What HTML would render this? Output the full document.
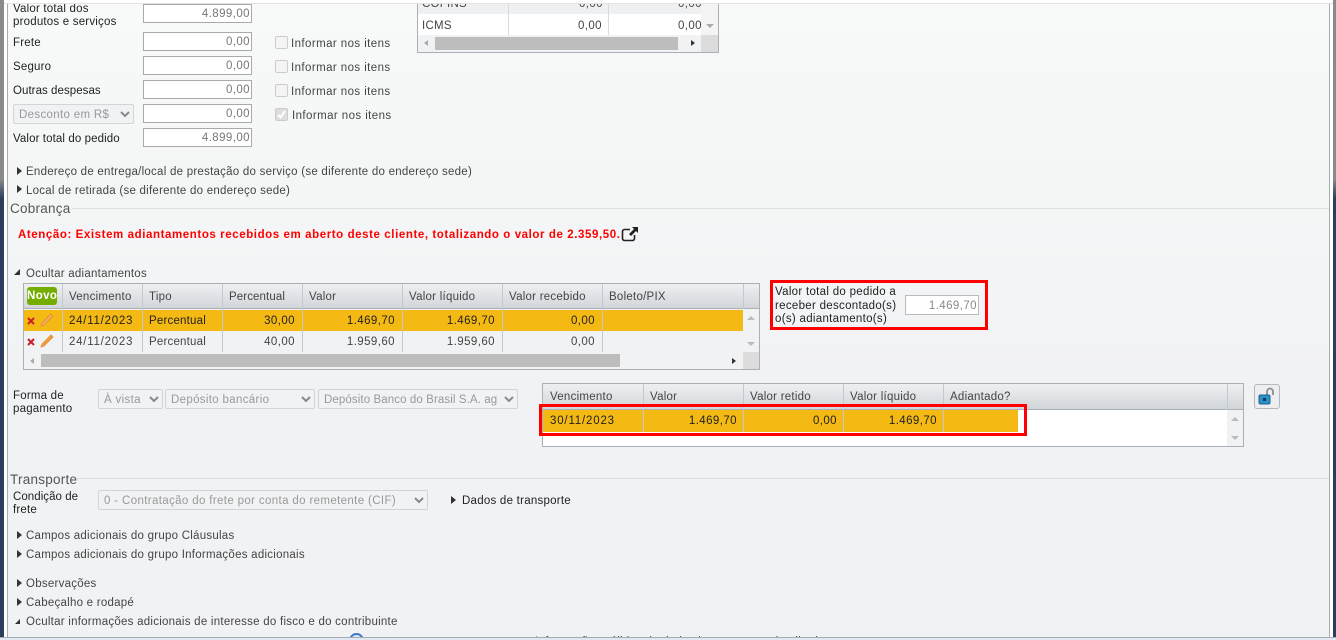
<!DOCTYPE html>
<html lang="pt"><head><meta charset="utf-8"><title>Cobrança</title>
<style>
html,body{margin:0;padding:0;width:1336px;height:640px;overflow:hidden;background:#f1f2f4}
body{position:relative;font-family:"Liberation Sans",Arial,sans-serif;font-size:11.5px;color:#444;letter-spacing:.25px}
.a{position:absolute;box-sizing:border-box}
.t{position:absolute;white-space:nowrap;line-height:14px;margin-top:1px}
.d{color:#222;letter-spacing:.2px}
.n{letter-spacing:.75px}
.inf{letter-spacing:.42px}
.in{position:absolute;box-sizing:border-box;background:#fff;border:1px solid #a9a9a9;color:#777;text-align:right;padding-right:1px;line-height:19px;height:19px;width:109px;left:143px;letter-spacing:.42px}
.cb{position:absolute;box-sizing:border-box;left:275px;width:13px;height:13px;border:1px solid #ccc;border-radius:2px;background:#f4f4f4}
.sel{position:absolute;box-sizing:border-box;height:20px;border:1px solid #d4d4d4;border-radius:2px;background:#f1f2f4;color:#999;line-height:20px;padding-left:5px;white-space:nowrap;overflow:hidden;letter-spacing:.33px}
.sel svg{position:absolute;right:3px;top:6px}
.hd{background:linear-gradient(#eef0f2,#d2d5d9)}
.vl{position:absolute;width:1px;background:#c2c8d0}
.bar{position:absolute;background:#bdbdbd}
.r{position:absolute;white-space:nowrap;text-align:right;line-height:14px;margin-top:1px;letter-spacing:.42px}
.tri{position:absolute;width:0;height:0;border-style:solid;border-width:4px 0 4px 5px;border-color:transparent transparent transparent #333}
.tdn{position:absolute;width:0;height:0;border-style:solid;border-width:0 0 6px 6px;border-color:transparent transparent #333 transparent}
</style></head><body>
<div class="a" style="left:0;top:0;width:1336px;height:640px;background:linear-gradient(#f8fafa,#f4f6f6 30%,#f1f2f4 60%)"></div>
<div class="a" style="left:0;top:0;width:1336px;height:3px;background:#fff;border-bottom:1px solid #e2e2e2;height:4px"></div>
<div class="a" style="left:0;top:0;width:4px;height:640px;background:linear-gradient(#8a8a8a 0,#8a8a8a 28%,#2b3f5c 31%)"></div>
<div class="a" style="left:4px;top:0;width:3px;height:640px;background:#fff"></div>
<div class="a" style="left:7px;top:0;width:1px;height:640px;background:#a8adb4"></div>
<div class="a" style="left:1329px;top:0;width:1px;height:640px;background:#a8adb4"></div>
<div class="a" style="left:1330px;top:0;width:3px;height:640px;background:#fff"></div>
<div class="a" style="left:1333px;top:0;width:3px;height:640px;background:linear-gradient(#8a8a8a 0,#8a8a8a 28%,#2b3f5c 31%)"></div>

<span class="t d" style="left:13px;top:1px">Valor total dos</span>
<span class="t d" style="left:13px;top:14px">produtos e serviços</span>
<div class="in" style="top:4px">4.899,00</div>
<span class="t d" style="left:13px;top:35px">Frete</span>
<div class="in" style="top:32px">0,00</div>
<div class="cb" style="top:36px"></div><span class="t inf" style="left:291px;top:36px">Informar nos itens</span>
<span class="t d" style="left:13px;top:59px">Seguro</span>
<div class="in" style="top:56px">0,00</div>
<div class="cb" style="top:60px"></div><span class="t inf" style="left:291px;top:60px">Informar nos itens</span>
<span class="t d" style="left:13px;top:83px;letter-spacing:.05px">Outras despesas</span>
<div class="in" style="top:80px">0,00</div>
<div class="cb" style="top:84px"></div><span class="t inf" style="left:291px;top:84px">Informar nos itens</span>
<div class="sel" style="left:13px;top:104px;width:121px">Desconto em R$<svg width="10" height="7" viewBox="0 0 10 7"><path d="M1 1l4 4 4-4" fill="none" stroke="#888" stroke-width="2"/></svg></div>
<div class="in" style="top:104px">0,00</div>
<div class="cb" style="top:108px;background:#ddd"><svg width="11" height="11" viewBox="0 0 11 11" style="position:absolute;left:0;top:0"><path d="M2 6l2.500 2.500L9 2" fill="none" stroke="#fff" stroke-width="2"/></svg></div><span class="t inf" style="left:292px;top:108px">Informar nos itens</span>
<span class="t d" style="left:13px;top:131px;letter-spacing:.1px">Valor total do pedido</span>
<div class="in" style="top:128px">4.899,00</div>

<!-- top right table -->
<div class="a" style="left:417px;top:4px;width:302px;height:49px;background:#fff;border:1px solid #a9b0b8;border-top:0"></div>
<div class="a" style="left:418px;top:4px;width:283px;height:10px;background:#eff0f2"></div>
<div class="a" style="left:701px;top:4px;width:17px;height:31px;background:#f4f4f4"></div>
<div class="vl" style="left:508px;top:4px;height:31px;background:#d8dbdf"></div>
<div class="vl" style="left:608px;top:4px;height:31px;background:#d8dbdf"></div>
<div class="a" style="left:417px;top:0;width:302px;height:14px;overflow:hidden">
 <span class="t" style="left:5px;top:-4px">COFINS</span><span class="r" style="right:116px;top:-4px">0,00</span><span class="r" style="right:17px;top:-4px">0,00</span>
</div>
<div class="a" style="left:0;top:0;width:1336px;height:4px;background:#fff;border-bottom:1px solid #e2e2e2"></div>
<div class="a" style="left:0;top:0;width:4px;height:4px;background:#8a8a8a"></div>
<div class="a" style="left:1333px;top:0;width:3px;height:4px;background:#8a8a8a"></div>
<span class="t" style="left:422px;top:18px">ICMS</span>
<span class="r" style="right:734px;top:18px">0,00</span>
<span class="r" style="right:634px;top:18px">0,00</span>
<div class="a" style="left:706px;top:24px;border-style:solid;border-width:4px 4px 0;border-color:#aaa transparent transparent;width:0;height:0"></div>
<div class="a" style="left:418px;top:35px;width:300px;height:17px;background:#f1f2f4"></div>
<div class="a" style="left:701px;top:35px;width:17px;height:17px;background:#dcdcdc"></div>
<div class="bar" style="left:435px;top:37px;width:243px;height:13px"></div>
<div class="a" style="left:424px;top:40px;border-style:solid;border-width:3px 4px 3px 0;border-color:transparent #aaa transparent transparent;width:0;height:0"></div>
<div class="a" style="left:691px;top:40px;border-style:solid;border-width:3px 0 3px 4px;border-color:transparent transparent transparent #333;width:0;height:0"></div>

<div class="tri" style="left:17px;top:167px"></div><span class="t" style="left:26px;top:164px">Endereço de entrega/local de prestação do serviço (se diferente do endereço sede)</span>
<div class="tri" style="left:17px;top:185px"></div><span class="t" style="left:26px;top:183px">Local de retirada (se diferente do endereço sede)</span>

<span class="t" style="left:10px;top:201px;font-size:13.5px;color:#555">Cobrança</span>
<div class="a" style="left:72px;top:208px;width:1257px;height:1px;background:#dcdee0"></div>
<span class="t" style="left:18px;top:227px;color:#f00;font-weight:bold;letter-spacing:.585px">Atenção: Existem adiantamentos recebidos em aberto deste cliente, totalizando o valor de 2.359,50.</span>
<svg class="a" style="left:621px;top:226px" width="18" height="16" viewBox="0 0 18 16"><path d="M9 3.500H3.500a2 2 0 0 0-2 2v7a2 2 0 0 0 2 2h8a2 2 0 0 0 2-2V9" fill="none" stroke="#222" stroke-width="1.600"/><path d="M11 1h6v6l-2-2-5 5-2-2 5-5z" fill="#222"/></svg>

<div class="tdn" style="left:14px;top:269px"></div><span class="t" style="left:26px;top:266px">Ocultar adiantamentos</span>

<!-- table 1 -->
<div class="a" style="left:23px;top:283px;width:737px;height:87px;background:#f1f2f4;border:1px solid #a9b0b8"></div>
<div class="a hd" style="left:24px;top:284px;width:735px;height:25px;border-bottom:1px solid #a9b0b8"></div>
<div class="a" style="left:27px;top:287px;width:30px;height:18px;background:#74ac00;border-radius:3px;color:#fff;font-weight:bold;font-size:11.5px;line-height:18px;text-align:center;letter-spacing:.4px">Novo</div>
<div class="a" style="left:24px;top:310px;width:719px;height:21px;background:#f5b914"></div>
<div class="vl" style="left:62px;top:284px;height:68px"></div>
<div class="vl" style="left:142px;top:284px;height:68px"></div>
<div class="vl" style="left:222px;top:284px;height:68px"></div>
<div class="vl" style="left:302px;top:284px;height:68px"></div>
<div class="vl" style="left:402px;top:284px;height:68px"></div>
<div class="vl" style="left:502px;top:284px;height:68px"></div>
<div class="vl" style="left:602px;top:284px;height:68px"></div>
<div class="vl" style="left:743px;top:284px;height:25px"></div>
<span class="t" style="left:69px;top:289px">Vencimento</span>
<span class="t" style="left:149px;top:289px">Tipo</span>
<span class="t" style="left:229px;top:289px;letter-spacing:.1px">Percentual</span>
<span class="t" style="left:309px;top:289px">Valor</span>
<span class="t" style="left:409px;top:289px">Valor líquido</span>
<span class="t" style="left:509px;top:289px">Valor recebido</span>
<span class="t" style="left:609px;top:289px">Boleto/PIX</span>

<svg class="a" style="left:27px;top:317px" width="8" height="8" viewBox="0 0 8 8"><path d="M1 1l6 6M7 1L1 7" stroke="#c8202a" stroke-width="2"/></svg>
<svg class="a" style="left:40px;top:312px" width="15" height="15" viewBox="0 0 15 15"><path d="M2 11L11 2l2 2-9 9-3 1z" fill="#f5b060" stroke="#e08a30" stroke-width=".8"/></svg>
<svg class="a" style="left:27px;top:338px" width="8" height="8" viewBox="0 0 8 8"><path d="M1 1l6 6M7 1L1 7" stroke="#c8202a" stroke-width="2"/></svg>
<svg class="a" style="left:40px;top:333px" width="15" height="15" viewBox="0 0 15 15"><path d="M2 11L11 2l2 2-9 9-3 1z" fill="#f0a040" stroke="#e08a30" stroke-width=".8"/></svg>

<span class="t d n" style="left:69px;top:313px">24/11/2023</span>
<span class="t d" style="left:149px;top:313px">Percentual</span>
<span class="r d" style="right:1041px;top:313px;letter-spacing:.42px">30,00</span>
<span class="r d" style="right:941px;top:313px;letter-spacing:.42px">1.469,70</span>
<span class="r d" style="right:841px;top:313px;letter-spacing:.42px">1.469,70</span>
<span class="r d" style="right:741px;top:313px;letter-spacing:.42px">0,00</span>
<span class="t n" style="left:69px;top:334px">24/11/2023</span>
<span class="t" style="left:149px;top:334px;letter-spacing:.2px">Percentual</span>
<span class="r" style="right:1041px;top:334px">40,00</span>
<span class="r" style="right:941px;top:334px">1.959,60</span>
<span class="r" style="right:841px;top:334px">1.959,60</span>
<span class="r" style="right:741px;top:334px">0,00</span>
<div class="a" style="left:747px;top:316px;border-style:solid;border-width:0 4px 4px;border-color:transparent transparent #bbb;width:0;height:0"></div>
<div class="a" style="left:747px;top:342px;border-style:solid;border-width:4px 4px 0;border-color:#bbb transparent transparent;width:0;height:0"></div>
<div class="bar" style="left:41px;top:354px;width:579px;height:13px"></div>
<div class="a" style="left:743px;top:352px;width:16px;height:17px;background:#dcdcdc"></div>
<div class="a" style="left:30px;top:358px;border-style:solid;border-width:3px 4px 3px 0;border-color:transparent #aaa transparent transparent;width:0;height:0"></div>
<div class="a" style="left:732px;top:358px;border-style:solid;border-width:3px 0 3px 4px;border-color:transparent transparent transparent #333;width:0;height:0"></div>

<!-- red box -->
<div class="a" style="left:770px;top:280px;width:218px;height:50px;border:3px solid #f00"></div>
<span class="t d" style="left:775px;top:285px;line-height:13.500px;white-space:normal;width:130px;letter-spacing:.3px">Valor total do pedido a receber descontado(s) o(s) adiantamento(s)</span>
<div class="in" style="left:905px;top:295px;width:74px;height:20px;line-height:20px;border-color:#bbb;color:#888">1.469,70</div>

<!-- forma de pagamento -->
<span class="t d" style="left:13px;top:388px">Forma de</span>
<span class="t d" style="left:13px;top:401px">pagamento</span>
<div class="sel" style="left:98px;top:389px;width:65px">À vista<svg width="10" height="7" viewBox="0 0 10 7"><path d="M1 1l4 4 4-4" fill="none" stroke="#888" stroke-width="2"/></svg></div>
<div class="sel" style="left:165px;top:389px;width:150px">Depósito bancário<svg width="10" height="7" viewBox="0 0 10 7"><path d="M1 1l4 4 4-4" fill="none" stroke="#888" stroke-width="2"/></svg></div>
<div class="sel" style="left:318px;top:389px;width:200px;letter-spacing:.1px">Depósito Banco do Brasil S.A. ag<svg width="10" height="7" viewBox="0 0 10 7"><path d="M1 1l4 4 4-4" fill="none" stroke="#888" stroke-width="2"/></svg></div>

<!-- table 2 -->
<div class="a" style="left:542px;top:383px;width:702px;height:64px;background:#fff;border:1px solid #a9b0b8"></div>
<div class="a hd" style="left:543px;top:384px;width:700px;height:26px;border-bottom:1px solid #a9b0b8"></div>
<div class="a" style="left:1227px;top:410px;width:16px;height:36px;background:#f1f2f4"></div>
<div class="a" style="left:543px;top:410px;width:475px;height:22px;background:#f5b914"></div>
<div class="vl" style="left:643px;top:384px;height:48px"></div>
<div class="vl" style="left:743px;top:384px;height:48px"></div>
<div class="vl" style="left:843px;top:384px;height:48px"></div>
<div class="vl" style="left:943px;top:384px;height:48px"></div>
<div class="vl" style="left:1227px;top:384px;height:26px"></div>
<span class="t" style="left:550px;top:389px">Vencimento</span>
<span class="t" style="left:650px;top:389px">Valor</span>
<span class="t" style="left:750px;top:389px">Valor retido</span>
<span class="t" style="left:850px;top:389px">Valor líquido</span>
<span class="t" style="left:950px;top:389px">Adiantado?</span>
<span class="t d" style="left:550px;top:413px;letter-spacing:.82px">30/11/2023</span>
<span class="r d" style="right:599px;top:413px;letter-spacing:.42px">1.469,70</span>
<span class="r d" style="right:499px;top:413px;letter-spacing:.42px">0,00</span>
<span class="r d" style="right:399px;top:413px;letter-spacing:.42px">1.469,70</span>
<div class="a" style="left:1231px;top:417px;border-style:solid;border-width:0 4px 4px;border-color:transparent transparent #bbb;width:0;height:0"></div>
<div class="a" style="left:1231px;top:436px;border-style:solid;border-width:4px 4px 0;border-color:#bbb transparent transparent;width:0;height:0"></div>
<div class="a" style="left:539px;top:404px;width:488px;height:32px;border:3px solid #f00"></div>

<div class="a" style="left:1254px;top:384px;width:26px;height:25px;border:1px solid #b4b8be;border-radius:3px;background:#eceef0"></div>
<svg class="a" style="left:1258px;top:387px" width="18" height="19" viewBox="0 0 18 19"><path d="M9 8V4.500a3 3 0 0 1 6 0V8" fill="none" stroke="#8a8f96" stroke-width="1.800"/><rect x="1" y="8" width="11" height="9" rx="1.500" fill="#2b8fc8" stroke="#1d5f8e"/><rect x="5" y="11" width="3" height="3" fill="#123a58"/></svg>

<!-- transporte -->
<span class="t" style="left:10px;top:472px;font-size:13.5px;color:#555">Transporte</span>
<div class="a" style="left:77px;top:478px;width:1252px;height:1px;background:#dcdee0"></div>
<span class="t d" style="left:13px;top:489px;letter-spacing:.05px">Condição de</span>
<span class="t d" style="left:13px;top:502px">frete</span>
<div class="sel" style="left:98px;top:490px;width:330px;letter-spacing:.36px">0 - Contratação do frete por conta do remetente (CIF)<svg width="10" height="7" viewBox="0 0 10 7"><path d="M1 1l4 4 4-4" fill="none" stroke="#888" stroke-width="2"/></svg></div>
<div class="tri" style="left:451px;top:496px"></div><span class="t d" style="left:462px;top:493px;letter-spacing:.25px">Dados de transporte</span>

<div class="tri" style="left:17px;top:531px"></div><span class="t" style="left:26px;top:528px">Campos adicionais do grupo Cláusulas</span>
<div class="tri" style="left:17px;top:550px"></div><span class="t" style="left:26px;top:547px">Campos adicionais do grupo Informações adicionais</span>
<div class="tri" style="left:17px;top:579px"></div><span class="t" style="left:26px;top:576px">Observações</span>
<div class="tri" style="left:17px;top:598px"></div><span class="t" style="left:26px;top:595px">Cabeçalho e rodapé</span>
<div class="tdn" style="left:15px;top:619px;border-width:0 0 5px 5px"></div><span class="t" style="left:26px;top:614px">Ocultar informações adicionais de interesse do fisco e do contribuinte</span>

<div class="a" style="left:349px;top:633px;width:15px;height:15px;border-radius:50%;background:#dbe7f7;border:2px solid #3f78c8"></div>
<span class="t" style="left:535px;top:634px">Informações válidas de dados internos para detalhados</span>
<div class="a" style="left:0;top:637px;width:1336px;height:3px;background:#dfe8f3;border-top:1px solid #a8adb4"></div>
</body></html>
